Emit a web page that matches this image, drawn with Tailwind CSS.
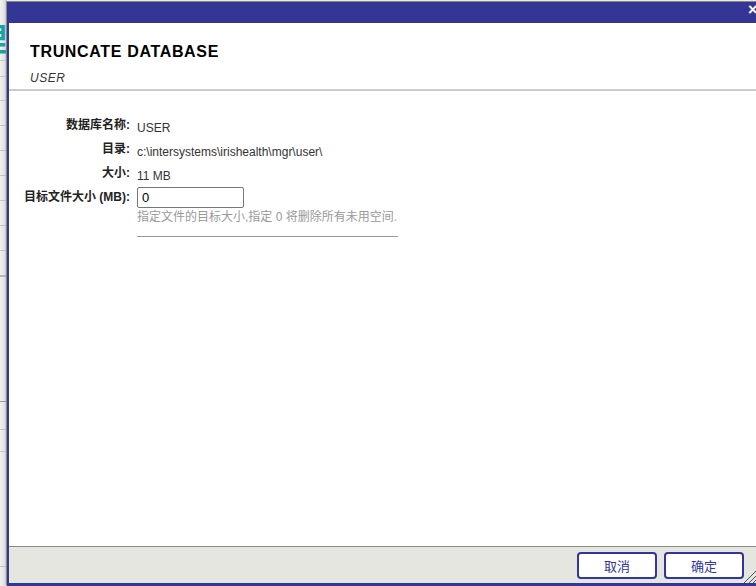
<!DOCTYPE html>
<html lang="en">
<head>
<meta charset="UTF-8">
<title>Truncate Database</title>
<script src="https://cdn.jsdelivr.net/npm/@tailwindcss/browser@4"></script>
</head>
<body class="bg-white w-[756px] h-[586px] overflow-hidden relative font-['Liberation_Sans','Noto_Sans_CJK_SC',sans-serif]">
  <!-- page behind the dialog -->
  <div class="w-[7px] h-[586px] overflow-hidden relative bg-gradient-to-r from-[#f2f2f2] to-[#d6d6d6]">
    <div class="h-[61px] border-b border-[#c4c4c4]"></div>
    <div class="h-[16px] border-b border-[#c4c4c4]"></div>
    <div class="h-[24px] border-b border-[#c4c4c4]"></div>
    <div class="h-[25px] border-b border-[#c4c4c4]"></div>
    <div class="h-[25px] border-b border-[#c4c4c4]"></div>
    <div class="h-[25px] border-b border-[#c4c4c4]"></div>
    <div class="h-[25px] border-b border-[#c4c4c4]"></div>
    <div class="h-[25px] border-b border-[#c4c4c4]"></div>
    <div class="h-[25px] border-b border-[#c4c4c4]"></div>
    <div class="h-[26px] border-b-2 border-[#b8b8b8]"></div>
    <div class="h-[125px] border-b border-[#999999]"></div>
    <div class="h-[28px] border-b border-[#c4c4c4]"></div>
    <div class="h-[22px] border-b border-[#c4c4c4]"></div>
    <div class="h-[115px] border-b border-[#c4c4c4]"></div>
    <div class="absolute left-[-25px] top-[17px] text-[#1aa3a3] text-[32px] leading-[40px] font-bold font-['Noto_Sans_CJK_SC',sans-serif]">理</div>
  </div>

  <div class="absolute left-[7px] top-[2px] w-[760px] h-[584px] flex flex-col bg-white border-l-2 border-[#333695] shadow-[-1px_-1px_1px_#888888]">
    <div class="h-[21px] shrink-0 bg-[#333695] relative">
      <span class="absolute left-[739px] top-[0px] text-white text-[16px] leading-4 font-bold">×</span>
    </div>
    <div class="pl-[21px] pt-[20px] h-[68px] shrink-0 border-b-2 border-[#cbcbcb]">
      <h1 class="text-[16px] leading-[18px] font-bold tracking-[0.66px] text-black">TRUNCATE DATABASE</h1>
      <p class="mt-[10px] text-[12px] leading-[14px] italic tracking-[0.5px] text-[#333333]">USER</p>
    </div>
    <div class="flex-1 pt-[27px]">
      <div class="grid grid-cols-[121px_1fr] grid-rows-[24px_24px_21px_auto] gap-x-[7px] text-[12px]">
        <div class="text-right font-bold leading-[14px] text-[#222222]">数据库名称:</div>
        <div class="leading-[20px] text-[#333333]">USER</div>
        <div class="text-right font-bold leading-[14px] text-[#222222]">目录:</div>
        <div class="leading-[20px] text-[#333333]">c:\intersystems\irishealth\mgr\user\</div>
        <div class="text-right font-bold leading-[14px] text-[#222222]">大小:</div>
        <div class="leading-[20px] text-[#333333]">11 MB</div>
        <div class="text-right font-bold leading-[20px] text-[#222222]">目标文件大小 (MB):</div>
        <div>
          <input value="0" class="block w-[107px] h-[21px] px-1 border border-[#767676] rounded-[2px] text-[13px] text-black">
          <p class="w-[261px] h-[29px] pt-[1px] leading-[16px] border-b border-[#999999] text-[#999999] whitespace-nowrap">指定文件的目标大小,指定 0 将删除所有未用空间.</p>
        </div>
      </div>
    </div>
    <div class="h-[37px] shrink-0 bg-[#e6e6e1] border-t border-[#888888] flex justify-start gap-[7px] pl-[568px] pt-[5px] relative">
      <button class="w-[80px] h-[27px] pt-[2px] bg-white border-2 border-[#333695] rounded-[4px] text-[#333695] text-[13px]">取消</button>
      <button class="w-[80px] h-[27px] pt-[2px] bg-white border-2 border-[#333695] rounded-[4px] text-[#333695] text-[13px]">确定</button>
      <svg class="absolute left-[735px] top-[24px]" width="12" height="12" viewBox="0 0 12 12"><path d="M0 12L12 0M5 12L12 5M9 12L12 9" stroke="#555555" fill="none"/></svg>
    </div>
    <div class="h-[3px] shrink-0 bg-[#333695]"></div>
  </div>
</body>
</html>
